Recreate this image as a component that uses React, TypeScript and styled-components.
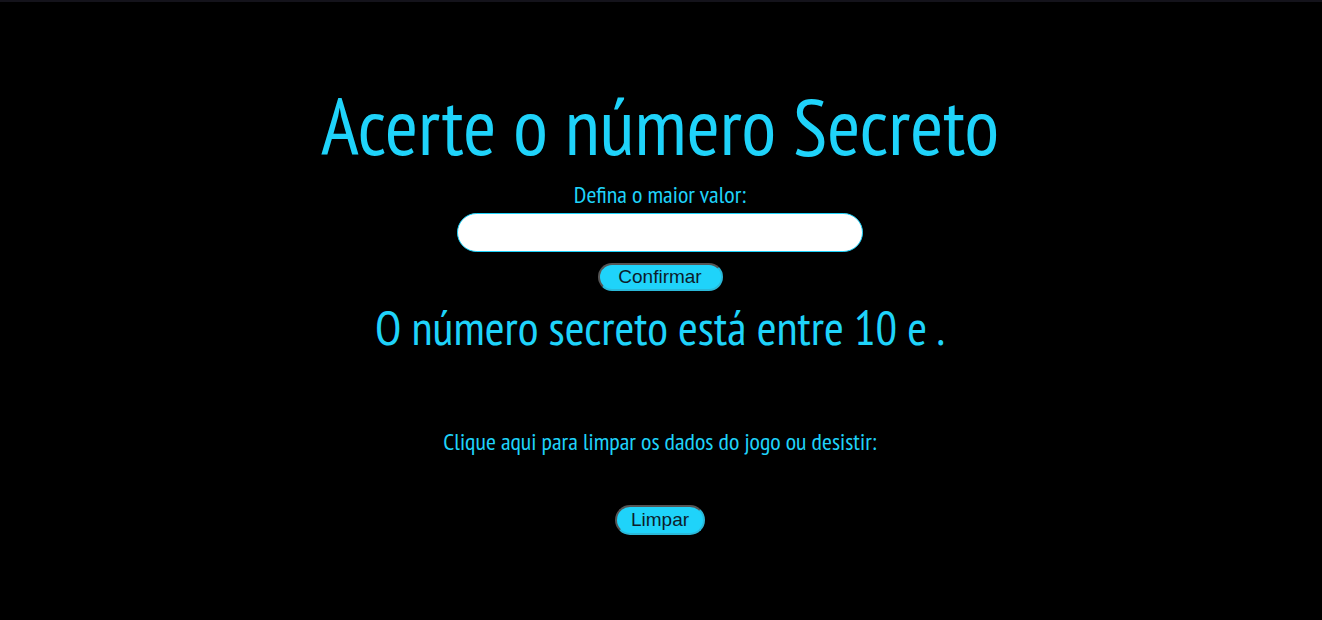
import styled, { createGlobalStyle } from "styled-components"

const cyan = "#1fd3fa"

const GlobalStyle = createGlobalStyle`
  html, body {
    margin: 0;
    padding: 0;
    background: #000;
  }
  body {
    border-top: 2px solid #14131b;
    font-family: "PT Sans Narrow", "Liberation Sans Narrow", "Liberation Sans", sans-serif;
  }
`

const Page = styled.main`
  display: flex;
  flex-direction: column;
  align-items: center;
  min-height: 618px;
  padding-right: 2px;
  color: ${cyan};
`

const Title = styled.h1`
  margin: 76px 0 0;
  font-size: 80px;
  font-weight: 400;
  line-height: 96px;
`

const Label = styled.label`
  margin-top: 6px;
  font-size: 24px;
  line-height: 30px;
`

const Field = styled.input`
  box-sizing: border-box;
  width: 406px;
  height: 39px;
  margin-top: 3px;
  border: 1px solid ${cyan};
  border-radius: 20px;
  background: #fff;
  outline: none;
`

const Button = styled.button<{ $width: number; $height: number; $gap: number }>`
  box-sizing: border-box;
  width: ${(p) => p.$width}px;
  height: ${(p) => p.$height}px;
  margin-top: ${(p) => p.$gap}px;
  border: 2px solid;
  border-color: #555 #2ab8d8 #2ab8d8 #555;
  border-radius: 15px;
  background: ${cyan};
  color: #0c1c2a;
  font-family: "Liberation Sans", Arial, sans-serif;
  font-size: 19px;
  padding: 0;
`

const Hint = styled.h2`
  margin: 9px 0 0;
  font-size: 48px;
  font-weight: 400;
  line-height: 54px;
`

const Note = styled.p`
  margin: 74px 0 0;
  font-size: 24px;
  line-height: 28px;
`

export default function App() {
  return (
    <>
      <GlobalStyle />
      <Page>
        <Title>Acerte o número Secreto</Title>
        <Label>Defina o maior valor:</Label>
        <Field type="number" />
        <Button $width={125} $height={28} $gap={11}>Confirmar</Button>
        <Hint>O número secreto está entre 10 e .</Hint>
        <Note>Clique aqui para limpar os dados do jogo ou desistir:</Note>
        <Button $width={90} $height={30} $gap={49}>Limpar</Button>
      </Page>
    </>
  )
}
